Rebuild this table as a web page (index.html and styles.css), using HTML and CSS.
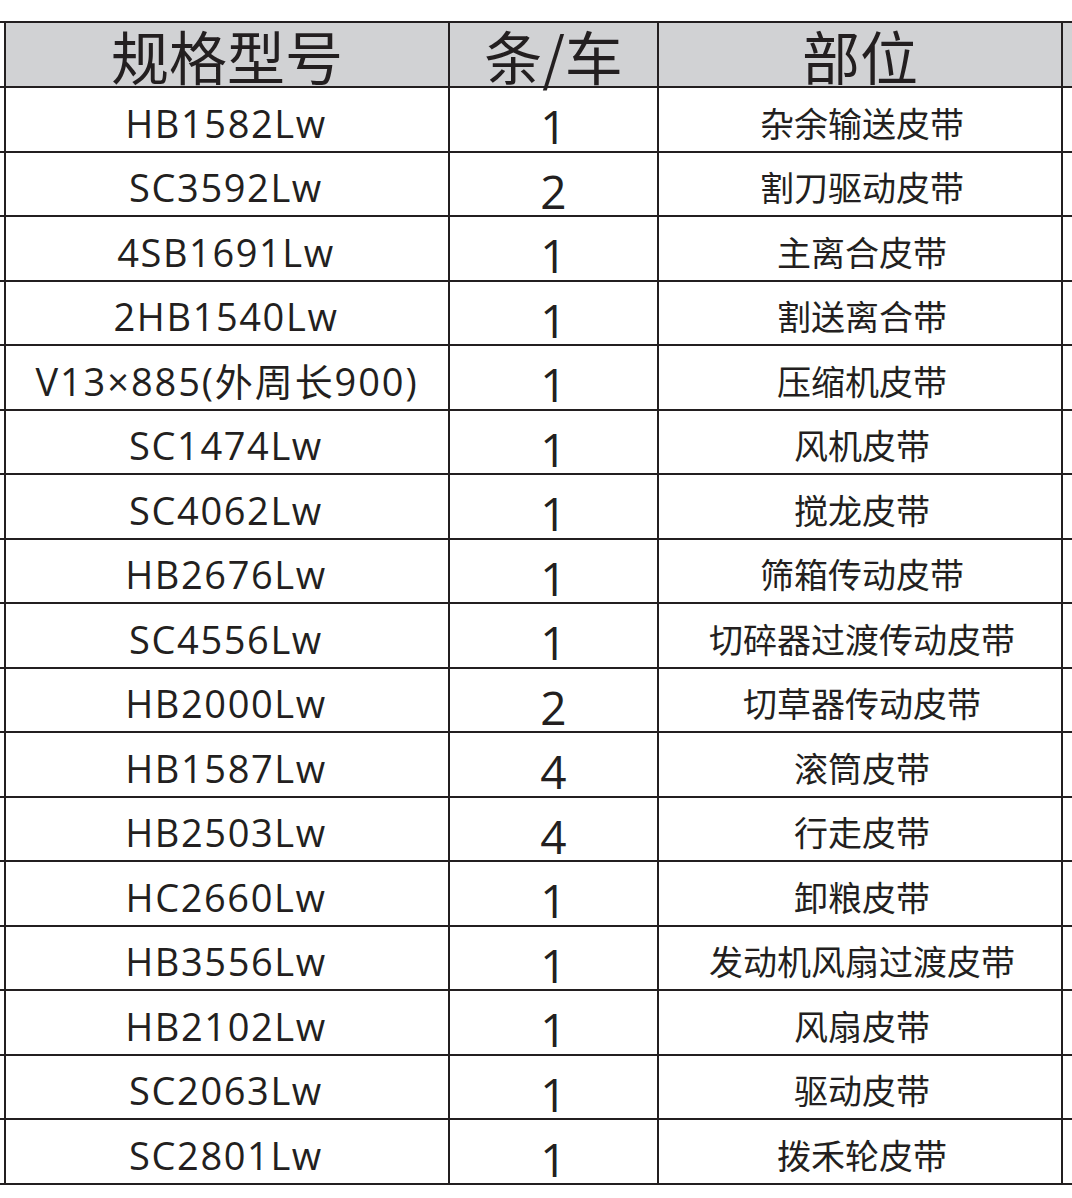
FILE: index.html
```html
<!DOCTYPE html>
<html lang="zh">
<head>
<meta charset="utf-8">
<title>皮带规格表</title>
<link rel="stylesheet" href="styles.css">
</head>
<body>
<div class="sheet">
  <div class="row head">
    <div class="edge"></div>
    <div class="cell">规格型号</div>
    <div class="cell">条/车</div>
    <div class="cell">部位</div>
    <div class="cell tail"></div>
  </div>
  <div class="row"><div class="edge"></div><div class="cell model">HB1582Lw</div><div class="cell qty">1</div><div class="cell part">杂余输送皮带</div><div class="cell tail"></div></div>
  <div class="row"><div class="edge"></div><div class="cell model">SC3592Lw</div><div class="cell qty">2</div><div class="cell part">割刀驱动皮带</div><div class="cell tail"></div></div>
  <div class="row"><div class="edge"></div><div class="cell model">4SB1691Lw</div><div class="cell qty">1</div><div class="cell part">主离合皮带</div><div class="cell tail"></div></div>
  <div class="row"><div class="edge"></div><div class="cell model">2HB1540Lw</div><div class="cell qty">1</div><div class="cell part">割送离合带</div><div class="cell tail"></div></div>
  <div class="row"><div class="edge"></div><div class="cell model wide">V13×885(外周长900)</div><div class="cell qty">1</div><div class="cell part">压缩机皮带</div><div class="cell tail"></div></div>
  <div class="row"><div class="edge"></div><div class="cell model">SC1474Lw</div><div class="cell qty">1</div><div class="cell part">风机皮带</div><div class="cell tail"></div></div>
  <div class="row"><div class="edge"></div><div class="cell model">SC4062Lw</div><div class="cell qty">1</div><div class="cell part">搅龙皮带</div><div class="cell tail"></div></div>
  <div class="row"><div class="edge"></div><div class="cell model">HB2676Lw</div><div class="cell qty">1</div><div class="cell part">筛箱传动皮带</div><div class="cell tail"></div></div>
  <div class="row"><div class="edge"></div><div class="cell model">SC4556Lw</div><div class="cell qty">1</div><div class="cell part">切碎器过渡传动皮带</div><div class="cell tail"></div></div>
  <div class="row"><div class="edge"></div><div class="cell model">HB2000Lw</div><div class="cell qty">2</div><div class="cell part">切草器传动皮带</div><div class="cell tail"></div></div>
  <div class="row"><div class="edge"></div><div class="cell model">HB1587Lw</div><div class="cell qty">4</div><div class="cell part">滚筒皮带</div><div class="cell tail"></div></div>
  <div class="row"><div class="edge"></div><div class="cell model">HB2503Lw</div><div class="cell qty">4</div><div class="cell part">行走皮带</div><div class="cell tail"></div></div>
  <div class="row"><div class="edge"></div><div class="cell model">HC2660Lw</div><div class="cell qty">1</div><div class="cell part">卸粮皮带</div><div class="cell tail"></div></div>
  <div class="row"><div class="edge"></div><div class="cell model">HB3556Lw</div><div class="cell qty">1</div><div class="cell part">发动机风扇过渡皮带</div><div class="cell tail"></div></div>
  <div class="row"><div class="edge"></div><div class="cell model">HB2102Lw</div><div class="cell qty">1</div><div class="cell part">风扇皮带</div><div class="cell tail"></div></div>
  <div class="row"><div class="edge"></div><div class="cell model">SC2063Lw</div><div class="cell qty">1</div><div class="cell part">驱动皮带</div><div class="cell tail"></div></div>
  <div class="row"><div class="edge"></div><div class="cell model">SC2801Lw</div><div class="cell qty">1</div><div class="cell part">拨禾轮皮带</div><div class="cell tail"></div></div>
</div>
</body>
</html>
```
FILE: styles.css
```css
html, body {
  margin: 0;
  padding: 0;
  background: #ffffff;
}
body {
  width: 1072px;
  overflow: hidden;
  color: #231f20;
  font-family: "Noto Sans CJK SC", "Open Sans", sans-serif;
}
.sheet {
  padding-top: 21px;
  width: 1072px;
}
.row {
  display: grid;
  grid-template-columns: 4px 444px 209px 404px 1fr;
  grid-template-rows: minmax(0, 1fr);
  height: 64.53px;
  box-sizing: border-box;
  border-bottom: 2px solid #231f20;
}
.row.head {
  height: 67px;
  border-top: 2px solid #231f20;
}
.cell {
  border-left: 2px solid #231f20;
  display: flex;
  align-items: center;
  justify-content: center;
  white-space: nowrap;
  min-height: 0;
}
.head .cell {
  background: #d1d2d4;
  font-size: 58px;
  line-height: 63px;
  padding-top: 1px;
}
.model {
  font-family: "Open Sans", "Noto Sans CJK SC", sans-serif;
  font-size: 38px;
  line-height: 48px;
  letter-spacing: 1.6px;
  padding-top: 7px;
  padding-right: 2px;
}
.model.wide {
  letter-spacing: 1.9px;
  padding-right: 0;
}
.qty {
  font-family: "Open Sans", sans-serif;
  font-size: 46px;
  line-height: 48px;
  padding-top: 14px;
}
.part {
  font-size: 34px;
  line-height: 48px;
  padding-top: 7px;
  padding-left: 4px;
}
```
